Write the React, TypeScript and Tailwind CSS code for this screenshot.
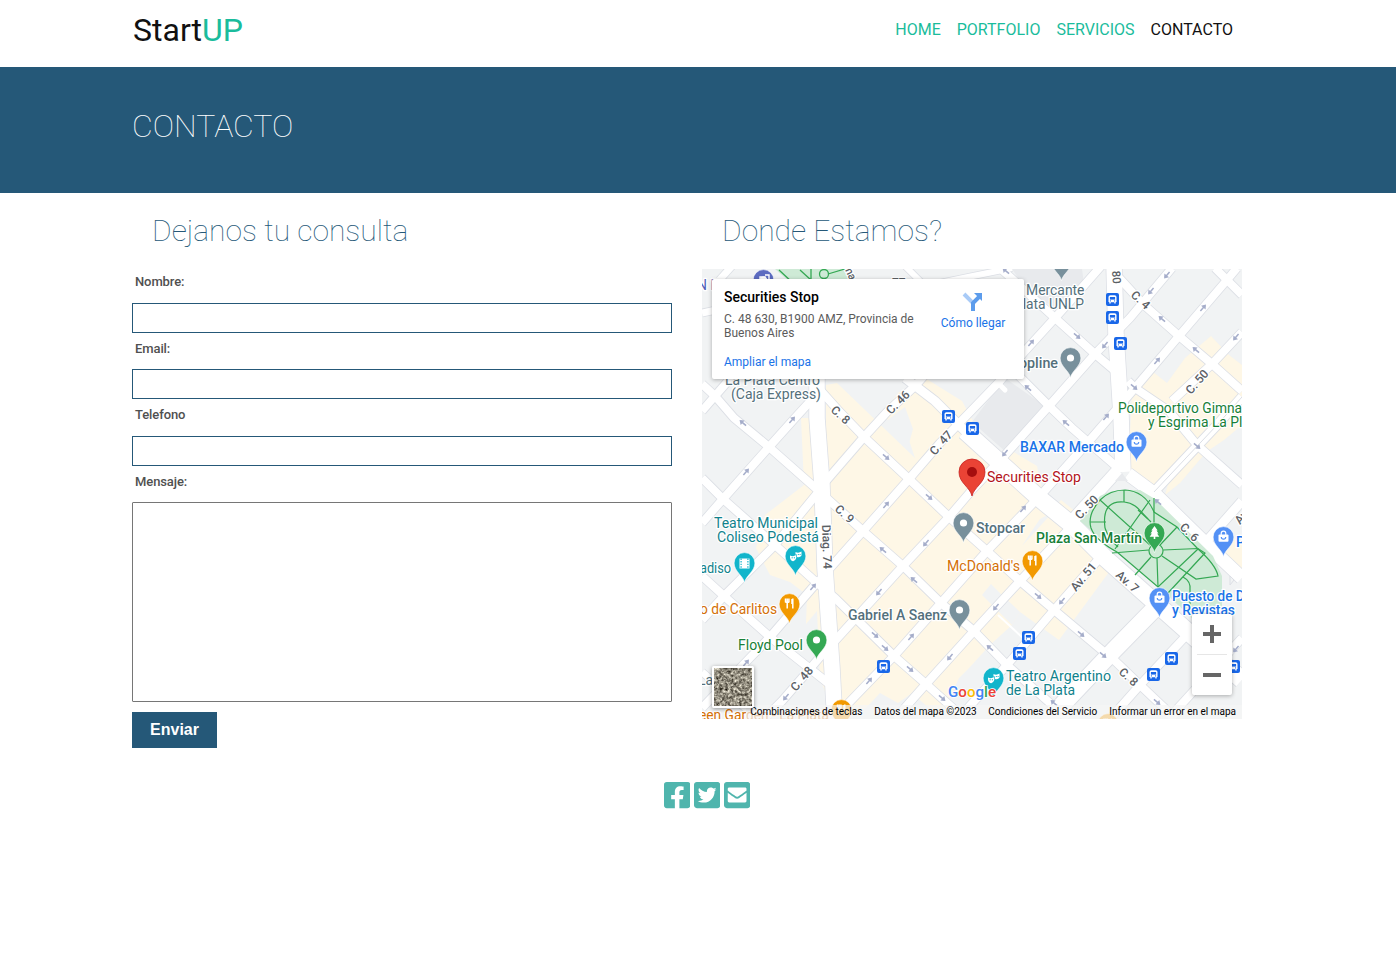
import React from "react";
import { FaEnvelopeSquare, FaFacebookSquare, FaTwitterSquare } from "react-icons/fa";

const roads: [string, number][] = [
  ["702,384 715,396 734,418 769,447 820,492 863,531 903,566 941,603 974,631 1007,665 1068,719", 8],
  ["702,478 723,499 775,545 817,583 835,598 894,656 926,684 965,719", 8],
  ["702,576 724,596 770,637 828,683", 8],
  ["702,672 735,700 760,719", 7],
  ["812,381 838,410 864,437 909,479 949,517 987,551 1020,581 1054,610 1110,657", 8],
  ["1114,660 1140,685 1176,719", 8],
  ["1012,369 1028,385 1049,406 1072,428 1118,468", 8],
  ["1000,268 1009,276 1055,318 1095,354 1114,370", 8],
  ["1128,381 1135,388 1169,411 1197,445 1242,485", 8],
  ["1112,270 1144,305 1179,336 1212,364 1242,391", 8],
  ["1215,268 1227,280 1242,295", 8],
  ["702,411 715,396 735,373", 8],
  ["702,523 723,499 769,447 795,418 816,395", 8],
  ["702,620 724,596 775,545 820,490", 8],
  ["826,481 864,437 887,412 915,386 930,369", 8],
  ["702,708 745,663 770,637 820,579", 8],
  ["830,568 863,531 909,479 940,443 972,410 1000,381 1025,351 1055,318 1080,290 1102,265", 8],
  ["764,719 782,701 802,678 826,650", 8],
  ["833,643 903,566 949,517 972,490 1005,455 1049,406 1095,354 1130,318 1172,268", 8],
  ["834,718 894,656 941,603 987,551 1040,496 1090,440 1135,388 1179,336 1227,280 1237,268", 8],
  ["895,719 926,684 974,631 1020,581 1068,530", 8],
  ["1172,401 1212,364 1242,332", 8],
  ["958,719 1007,665 1054,610 1105,552", 8],
  ["1110,719 1140,685 1184,638", 8],
  ["1168,719 1242,638", 8],
  ["1205,543 1242,501", 9],
  ["1152,494 1217,425 1242,397", 9],
  ["702,313 716,310", 7],
  ["925,286 973,276 1012,268", 6],
  ["715,285 732,266", 7],
  ["905,266 925,286", 6],
  ["1070,523 1118,470", 12],
  ["1128,474 1155,494 1205,543 1242,578", 13],
  ["905,378 935,401 972,438", 9],
  ["965,431 1039,498 1072,525 1105,558 1195,638 1242,680", 17],
  ["1045,722 1062,705 1114,650 1160,603", 17],
];

const plazaPaths = [
  "M1100 500 Q1110 490 1125 490 Q1145 491 1154 512 L1177 527 L1198 549 Q1216 565 1218 576 L1196 579 L1162 556",
  "M1100 500 Q1087 515 1091 528 Q1095 540 1117 552",
  "M1105 528 C1102 505 1113 501 1124 502 C1137 503 1141 513 1151 522",
  "M1105 528 Q1108 538 1118 547",
  "M1124 490 V502 M1090 522 H1106 M1100 500 L1150 545",
  "M1115 549 L1150 500 M1138 510 L1148 519 M1154 498 V545",
  "M1177 527 L1160 545 M1163 550 L1198 548.5 L1205 553 L1168 593",
  "M1149 550 L1112 553 M1117 552 L1158 587 L1198 549",
  "M1151 557 L1135 575 M1157 558 L1158 587 M1183 577 Q1191 581 1190 590 V616",
];

const arrows: [number, number, number][] = [
  [743, 423, 220], [746, 472, -49], [792, 420, -49], [886, 457, 40], [929, 497, 40], [886, 505, -49], [883, 550, 220], [926, 543, 130],
  [813, 587, -49], [879, 592, 130], [914, 580, 220], [875, 635, 40], [885, 648, 40], [911, 637, -49], [950, 657, 130], [910, 669, 40], [869, 681, -49], [942, 698, 40], [746, 663, -49], [786, 697, 130],
  [1006, 271, 220], [1077, 336, 40], [1031, 343, -49], [1105, 345, 130], [1151, 291, 130], [1167, 275, 130], [1162, 319, 220], [1203, 308, -49], [1157, 361, -49], [1196, 350, 220], [1236, 337, 130], [1134, 387, 40],
  [1028, 388, 220], [1066, 423, 220], [1106, 417, -49], [1005, 453, 130], [1197, 446, 40], [1158, 502, 220], [1023, 509, -49], [1038, 596, 40], [1062, 601, 130], [996, 607, 130], [990, 648, 220], [1081, 634, 40], [1103, 655, 40], [1157, 702, 40], [1236, 649, 130], [1054, 703, 220],
];

const busStops: [number, number][] = [
  [1112, 299], [1112, 317], [1120, 343], [948, 416], [972, 428], [883, 666], [1028, 637], [1019, 653], [1171, 658], [1153, 674], [1233, 666],
];

function Bus({ x, y }: { x: number; y: number }) {
  return (
    <g transform={`translate(${x + 0.5} ${y + 0.5})`}>
      <rect x="-6.5" y="-6.5" width="13" height="13" rx="2" fill="#1967e8" />
      <path d="M-4 2.6 V-2.5 Q-4 -4.2 -2 -4.2 H2 Q4 -4.2 4 -2.5 V2.6 H3.2 V4 H1.8 V2.8 H-1.8 V4 H-3.2 V2.6 Z" fill="#fff" />
      <rect x="-2.6" y="-2.5" width="5.2" height="2.6" fill="#1967e8" />
      <path d="M-2.6 1.4 h1.1 M1.5 1.4 h1.1" stroke="#1967e8" />
    </g>
  );
}

type PinKind = "dot" | "food" | "bag" | "mask" | "film" | "tree";

function Pin({ x, y, color, kind = "dot" }: { x: number; y: number; color: string; kind?: PinKind }) {
  return (
    <g transform={`translate(${x} ${y})`}>
      <path d="M0 19.8 C-1 13 -10.4 8.5 -10.4 0 A10.4 10.4 0 0 1 10.4 0 C10.4 8.5 1 13 0 19.8 Z" fill={color} stroke="#fff" strokeWidth="0.6" />
      {kind === "dot" && <circle r="3.6" fill="#fff" />}
      {kind === "food" && <path d="M-4 -5.5 v4 M-2.3 -5.5 v10 M-0.6 -5.5 v4 M-4 -1.8 h3.4 M3.3 -5.5 v10 M2.5 -5 v5" stroke="#fff" strokeWidth="1.5" />}
      {kind === "bag" && (
        <g>
          <rect x="-5" y="-2.4" width="10" height="7.2" rx="1" fill="#fff" />
          <path d="M-2.3 -2 V-3.5 A2.3 2.3 0 0 1 2.3 -3.5 V-2" fill="none" stroke="#fff" strokeWidth="1.2" />
          <path d="M-2.2 0 A2.2 2.2 0 0 0 2.2 0" fill="none" stroke={color} strokeWidth="1.2" />
        </g>
      )}
      {kind === "mask" && (
        <g fill="#fff">
          <path d="M0 -4 Q3 -2.5 6 -4.5 V-.5 Q4.5 2 1.5 1 V-1.5 H0 Z" />
          <path d="M-5.5 -.5 Q-2.5 1 0.8 -1 V2 Q-0.5 5.5 -2.5 5.3 Q-5.5 4.5 -5.5 1 Z" />
          <path d="M-3.9 1.8 h1.2 M-1.7 1.8 h1.2 M2.3 -1.5 h1 M4.1 -1.5 h1" stroke={color} />
        </g>
      )}
      {kind === "film" && (
        <g>
          <rect x="-5" y="-4.5" width="10" height="10" fill="#fff" />
          <path d="M-3.4 -4.5 V5.5 M3.4 -4.5 V5.5" stroke={color} strokeWidth="1.2" strokeDasharray="1.4 1.2" />
        </g>
      )}
      {kind === "tree" && <path d="M0 -7 L3.2 -2.6 H2 L4 .4 H2.6 L4.8 3.8 H.8 V6 H-.8 V3.8 H-4.8 L-2.6 .4 H-4 L-2 -2.6 H-3.2 Z" fill="#fff" />}
    </g>
  );
}

interface LabelProps {
  x: number;
  y: number;
  w?: number;
  color?: string;
  size?: number;
  weight?: number;
  rotate?: number;
  children: string;
}

function Label({ x, y, w, color = "#54707b", size = 14, weight = 400, rotate = 0, children }: LabelProps) {
  return (
    <text
      x={rotate ? 0 : x}
      y={rotate ? 0 : y + 0.3}
      transform={rotate ? `translate(${x} ${y}) rotate(${rotate})` : undefined}
      textLength={w}
      lengthAdjust="spacingAndGlyphs"
      fontSize={size}
      fontWeight={weight}
      fill={color}
      stroke="#fff"
      strokeWidth="2.5"
      strokeLinejoin="round"
      paintOrder="stroke"
    >
      {children}
    </text>
  );
}

const street = "#5b6065";
const teal = "#10828c";
const green = "#188038";
const orange = "#d47006";
const blue = "#1a73e8";
const slate = "#54707b";

function MapCanvas() {
  return (
    <svg className="block h-[450px] w-[540px] font-['Roboto',sans-serif]" viewBox="702 269 540 450">
      <rect x="702" y="269" width="540" height="450" fill="#f1f3f4" />
      <g fill="#fef7e6">
        <path d="M826 385 L837 383 L915 458 L909 440 L881 414 L899 392 L916 388 L975 440 L1040 499 L1105 556 L1112 568 L1059 640 L1038 625 L1020 612 L1012 625 L990 645 L970 667 L959 678 L940 718 L912 693 L898 703 L880 693 L865 709 L832 719 L826 600 Z" />
        <path d="M801 418 L804 485 L765 515 L756 548 L770 575 L790 582 L807 595 L806 624 L817 611 L820 678 L835 719 L830 575 L817 418 Z" />
        <path d="M925 378 L962 401 L975 425 L952 426 L912 386 Z M1000 463 L1007 448 L1037 466 L1042 490 L1030 490 Z M1061 500 L1076 512 L1070 521 L1054 508 Z" />
        <path d="M1152 371 L1167 383 L1185 358 L1211 336 L1229 355 L1242 365 V425 L1224 440 L1150 490 L1128 470 L1132 395 Z" />
        <path d="M1172 470 L1225 430 L1180 483 L1165 495 Z M1212 545 L1226 530 L1242 545 V568 L1235 568 Z" />
      </g>
      <path d="M886 421 L905 407 L913 429 L908 447 Z M1031 532 L1040 519 L1053 512 L1022 546 Z M982 595 L991 584 L1001 594 L1020 612 L1012 625 Z" fill="#f1f3f4" />
      <path d="M1005 378 L1046 407 L1007 453 L972 422 Z M1012 269 H1082 L1084 284 L1060 312 L1025 288 Z" fill="#e8eaed" />
      <path d="M775 269 H850 L857 282 H790 Z" fill="#ceead6" />
      <path d="M779 270 L793 283 M800 270 L811 280 M811 269 V280 M828 274 L845 269" stroke="#34a853" strokeWidth="1.3" />
      <circle cx="824" cy="274" r="4.5" fill="none" stroke="#34a853" strokeWidth="1.3" />

      <g fill="none" strokeLinejoin="round">
        {roads.map(([points, width], index) => (
          <polyline key={index} points={points} stroke="#dcdfe5" strokeWidth={width + 1.6} />
        ))}
        <path d="M817 370 L817 418 L822 485 L825 568 L832 668 L835 724" stroke="#dcdfe5" strokeWidth="17" />
        <path d="M1114 265 L1116 335 L1121 415 L1123 472" stroke="#dcdfe5" strokeWidth="17" />
        {roads.map(([points, width], index) => (
          <polyline key={index} points={points} stroke="#fff" strokeWidth={width} />
        ))}
        <path d="M817 370 L817 418 L822 485 L825 568 L832 668 L835 724" stroke="#fff" strokeWidth="15.5" />
        <path d="M1114 265 L1116 335 L1121 415 L1123 472" stroke="#fff" strokeWidth="15.5" />
        <path d="M1154 492 L1217 425 L1242 397" stroke="#dcdfe5" />
        <path d="M998 383 L1005 390" stroke="#fff" strokeWidth="5" strokeLinecap="round" />
        <path d="M998 615 L1024 639" stroke="#fff" strokeWidth="2" />
      </g>
      <path d="M1080 521 L1100 496 Q1110 490 1125 490 H1140 L1155 499 L1213 556 L1222 576 V607 L1195 622 L1190 616 L1166 594 Z" fill="#ceead6" />
      <path d="M1115 481 L1122 473 L1128 481 Z" fill="#e8eaed" />
      <path d="M1230 576 L1234 580 L1230 585 Z" fill="#f1f3f4" stroke="#dcdfe5" />
      <g fill="none" stroke="#34a853" strokeWidth="1.2">
        {plazaPaths.map((d) => (
          <path key={d} d={d} />
        ))}
        <circle cx="1156" cy="551" r="7" fill="#ceead6" />
      </g>

      {arrows.map(([x, y, angle], index) => (
        <g key={index} transform={`translate(${x} ${y}) rotate(${angle})`}>
          <path d="M-4 0 H3" stroke="#a5adca" strokeWidth="1.5" />
          <path d="M.5 -3 L4.5 0 L.5 3 Z" fill="#a5adca" />
        </g>
      ))}
      {busStops.map(([x, y]) => (
        <Bus key={`${x}-${y}`} x={x} y={y} />
      ))}

      <Label x={1112} y={271} size={11.5} weight={500} color={street} rotate={86}>80</Label>
      <Label x={1130} y={296} size={12} weight={500} color={street} rotate={42}>C. 4</Label>
      <Label x={1191} y={395} size={12} weight={500} color={street} rotate={-49}>C. 50</Label>
      <Label x={891} y={415} size={12} weight={500} color={street} rotate={-45}>C. 46</Label>
      <Label x={830} y={411} size={12} weight={500} color={street} rotate={42}>C. 8</Label>
      <Label x={935} y={456} size={12} weight={500} color={street} rotate={-49}>C. 47</Label>
      <Label x={834} y={510} size={12} weight={500} color={street} rotate={42}>C. 9</Label>
      <Label x={822} y={525} w={44} size={12} weight={500} color={street} rotate={88}>Diag. 74</Label>
      <Label x={1080} y={520} size={12} weight={500} color={street} rotate={-46}>C. 50</Label>
      <Label x={1179} y={528} size={12} weight={500} color={street} rotate={44}>C. 6</Label>
      <Label x={1076} y={592} size={12} weight={500} color={street} rotate={-50}>Av. 51</Label>
      <Label x={1115} y={576} size={12} weight={500} color={street} rotate={42}>Av. 7</Label>
      <Label x={796} y={692} size={12} weight={500} color={street} rotate={-50}>C. 48</Label>
      <Label x={1118} y={673} size={12} weight={500} color={street} rotate={42}>C. 8</Label>
      <Label x={1240} y={525} size={12} weight={500} color={street} rotate={-49}>Av. 53</Label>
      <Label x={845} y={270} size={11} weight={500} color={street} rotate={65}>na</Label>
      <Label x={892} y={287} size={12} weight={500} color={street}>77</Label>

      <Pin x={1061.5} y={261} color="#78909c" />
      <Pin x={763.5} y={280} color="#5c6bc0" />
      <path d="M760 284 V277 H765 V284 M765 275 H769 V284 M758.5 283.5 H770.5" fill="none" stroke="#fff" strokeWidth="1.4" />
      <Label x={697} y={290} color="#5360b7">N E</Label>
      <Label x={1026} y={295} w={58.5}>Mercante</Label>
      <Label x={1014} y={309} w={70}>Plata UNLP</Label>
      <Label x={1019} y={368} w={39} weight={500}>opline</Label>
      <Pin x={1070.5} y={358} color="#78909c" />
      <Label x={725} y={385} w={95}>La Plata Centro</Label>
      <Label x={731} y={399} w={90}>(Caja Express)</Label>
      <Label x={1118} y={413} w={142} color={green}>Polideportivo Gimnasia</Label>
      <Label x={1148} y={427} w={114} color={green}>y Esgrima La Plata</Label>
      <Label x={1020} y={452} w={104} weight={500} color={blue}>BAXAR Mercado</Label>
      <Pin x={1136.5} y={442} color="#5491f5" kind="bag" />
      <g transform="translate(972 472)">
        <path d="M0 24 C-2 15 -13 11 -13 0 A13 13 0 0 1 13 0 C13 11 2 15 0 24 Z" fill="#ea4335" stroke="#c5221f" strokeWidth="0.8" />
        <circle r="5" fill="#a50e0e" />
      </g>
      <Label x={987} y={482} w={94} color="#b3141b">Securities Stop</Label>
      <Pin x={963.5} y={523} color="#78909c" />
      <Label x={976} y={533} w={49} weight={500}>Stopcar</Label>
      <Label x={1036} y={543} w={106} weight={500} color={green}>Plaza San Martín</Label>
      <Pin x={1154.5} y={533} color="#34a853" kind="tree" />
      <Pin x={1223.5} y={537} color="#5491f5" kind="bag" />
      <Label x={1236} y={547} weight={500} color={blue}>Pa</Label>
      <Label x={714} y={528} w={104} color={teal}>Teatro Municipal</Label>
      <Label x={717} y={542} w={102} color={teal}>Coliseo Podestá</Label>
      <Pin x={795.5} y={556} color="#12b5cb" kind="mask" />
      <Pin x={744.5} y={563} color="#12b5cb" kind="film" />
      <Label x={689} y={573} w={42} color={teal}>aradiso</Label>
      <Label x={947} y={571} w={73} color={orange}>McDonald's</Label>
      <Pin x={1032.5} y={561} color="#f29900" kind="food" />
      <Label x={700} y={614} w={77} color={orange}>o de Carlitos</Label>
      <Pin x={789.5} y={604} color="#f29900" kind="food" />
      <Label x={848} y={620} w={99} weight={500} color={slate}>Gabriel A Saenz</Label>
      <Pin x={959.5} y={610} color="#78909c" />
      <Label x={738} y={650} w={65} color={green}>Floyd Pool</Label>
      <Pin x={816.5} y={640} color="#34a853" />
      <Pin x={1159.5} y={598} color="#5491f5" kind="bag" />
      <Label x={1172} y={601} w={88} weight={500} color={blue}>Puesto de Diar</Label>
      <Label x={1172} y={615} w={63} weight={500} color={blue}>y Revistas</Label>
      <Label x={698} y={685} color={slate}>La</Label>
      <Pin x={993.5} y={678} color="#12b5cb" kind="mask" />
      <Label x={1006} y={681} w={105} color={teal}>Teatro Argentino</Label>
      <Label x={1006} y={695} w={69} color={teal}>de La Plata</Label>
      <Label x={699} y={720} w={130} color={orange}>een Garden - La Plata</Label>
      <Pin x={841.5} y={710} color="#f29900" kind="food" />
      <Pin x={1108} y={724} color="#f29900" kind="food" />

      <text x="948" y="697" fontSize="15" fontWeight="500" textLength="48" lengthAdjust="spacingAndGlyphs" stroke="#fff" strokeWidth="1.5" paintOrder="stroke">
        <tspan fill="#4285f4">G</tspan>
        <tspan fill="#ea4335">o</tspan>
        <tspan fill="#fbbc04">o</tspan>
        <tspan fill="#4285f4">g</tspan>
        <tspan fill="#34a853">l</tspan>
        <tspan fill="#ea4335">e</tspan>
      </text>
    </svg>
  );
}

function PlaceCard() {
  return (
    <div className="absolute left-[10px] top-[10px] flex h-[100px] w-[312px] rounded-[2px] bg-white shadow-[0_1px_4px_rgba(0,0,0,0.3)]">
      <div className="w-[218px] shrink-0 pl-3 pt-[10px]">
        <div className="whitespace-nowrap text-[14px] font-medium leading-4 text-black">Securities Stop</div>
        <div className="mt-[7px] w-[200px] text-[12px] leading-[14px] text-[#5b5b5b]">C. 48 630, B1900 AMZ, Provincia de Buenos Aires</div>
        <div className="mt-[15px] text-[12px] leading-[14px] text-[#1a73e8]">Ampliar el mapa</div>
      </div>
      <div className="flex w-[86px] flex-col items-center pt-[12px]">
        <svg className="h-[22px] w-[22px]" viewBox="0 0 22 22">
          <path d="M2 3 L11 12 V20" fill="none" stroke="#a9cbf7" strokeWidth="4" />
          <path d="M11 20 V12 L17 6" fill="none" stroke="#5c9cec" strokeWidth="4" />
          <path d="M12 2 H20 V10 Z" fill="#5c9cec" />
        </svg>
        <div className="mt-[3px] whitespace-nowrap text-[12px] leading-[14px] text-[#1a73e8]">Cómo llegar</div>
      </div>
    </div>
  );
}

function MapEmbed() {
  return (
    <div className="relative h-[450px] w-[540px] overflow-hidden">
      <MapCanvas />
      <PlaceCard />
      <div className="absolute bottom-0 right-0 flex h-[14px] items-center gap-3 bg-[#f5f5f5]/70 pl-1 pr-[6px] text-[10px] leading-[14px] text-black">
        <span className="w-[112px] whitespace-nowrap">Combinaciones de teclas</span>
        <span className="w-[102px] whitespace-nowrap">Datos del mapa ©2023</span>
        <span className="w-[109px] whitespace-nowrap">Condiciones del Servicio</span>
        <span className="whitespace-nowrap">Informar un error en el mapa</span>
      </div>
      <div className="absolute bottom-[11px] left-[10px] size-[42px] overflow-hidden rounded-[2px] border-2 border-white shadow-[0_1px_4px_rgba(0,0,0,0.4)]">
        <svg className="block size-full" viewBox="0 0 38 38">
          <filter id="aerial" colorInterpolationFilters="sRGB">
            <feTurbulence type="fractalNoise" baseFrequency="0.35" numOctaves="4" seed="8" />
            <feColorMatrix values="1.1 .4 0 0 -.18  1.1 .4 0 0 -.2  1.05 .4 0 0 -.23  0 0 0 0 1" />
          </filter>
          <rect width="38" height="38" filter="url(#aerial)" />
        </svg>
      </div>
      <div className="absolute bottom-[24px] right-[10px] flex h-[81px] w-10 flex-col items-center rounded-[2px] bg-white shadow-[0_1px_4px_rgba(0,0,0,0.3)]">
        <svg className="h-10 w-10" viewBox="0 0 40 40">
          <path d="M11 20 H29 M20 11 V29" stroke="#666" strokeWidth="4" />
        </svg>
        <div className="h-px w-[30px] bg-[#e6e6e6]" />
        <svg className="h-10 w-10" viewBox="0 0 40 40">
          <path d="M11 20 H29" stroke="#666" strokeWidth="4" />
        </svg>
      </div>
    </div>
  );
}

function Field({ label }: { label: string }) {
  return (
    <label className="block h-[66.6px]">
      <span className="block h-[33.5px] pl-[3px] pt-1 text-[13px] font-medium leading-[18px] tracking-[-0.1px] text-[#505050]">{label}</span>
      <input className="block h-[30px] w-full border border-[#255878] bg-white px-2 outline-none" />
    </label>
  );
}

export default function App() {
  return (
    <div className="min-h-[959px] bg-white font-['Roboto',sans-serif]">
      <header className="h-[67px]">
        <div className="ml-[132px] flex w-[1110px] justify-between">
          <div className="pl-[1px] pt-[6px] text-[32px] leading-[48px] text-[#111]">
            Start<span className="text-[#1abc9c]">UP</span>
          </div>
          <nav className="flex gap-4 pr-[9px] pt-[18px] text-[16px] leading-6 text-[#1abc9c]">
            <a>HOME</a>
            <a>PORTFOLIO</a>
            <a>SERVICIOS</a>
            <a className="text-[#111]">CONTACTO</a>
          </nav>
        </div>
      </header>
      <section className="h-[126px] bg-[#255878] pl-[132px] pt-[39px]">
        <h1 className="text-[32px] font-thin leading-[40px] text-white">CONTACTO</h1>
      </section>
      <main className="ml-[132px] flex w-[1110px] gap-[30px]">
        <section className="w-[540px]">
          <h2 className="h-[76px] pl-[20px] pt-[18px] text-[30px] font-thin leading-[40px] text-[#255878]">Dejanos tu consulta</h2>
          <form>
            <Field label="Nombre:" />
            <Field label="Email:" />
            <Field label="Telefono" />
            <label className="block">
              <span className="block h-[33.2px] pl-[3px] pt-1 text-[13px] font-medium leading-[18px] tracking-[-0.1px] text-[#505050]">Mensaje:</span>
              <textarea className="block h-[200px] w-full resize-none rounded-[1px] border border-[#767676] outline-none" />
            </label>
            <button type="button" className="mt-[10px] block h-9 w-[85px] bg-[#255878] font-['Liberation_Sans',sans-serif] text-[16px] font-bold text-white">
              Enviar
            </button>
          </form>
        </section>
        <section className="w-[540px]">
          <h2 className="h-[76px] pl-[20px] pt-[18px] text-[30px] font-thin leading-[40px] text-[#255878]">Donde Estamos?</h2>
          <MapEmbed />
        </section>
      </main>
      <footer className="ml-[664px] mt-[32px] flex gap-[3.7px] text-[#4fb5ad]">
        <FaFacebookSquare className="h-[30px] w-[26.25px]" />
        <FaTwitterSquare className="h-[30px] w-[26.25px]" />
        <FaEnvelopeSquare className="h-[30px] w-[26.25px]" />
      </footer>
    </div>
  );
}
